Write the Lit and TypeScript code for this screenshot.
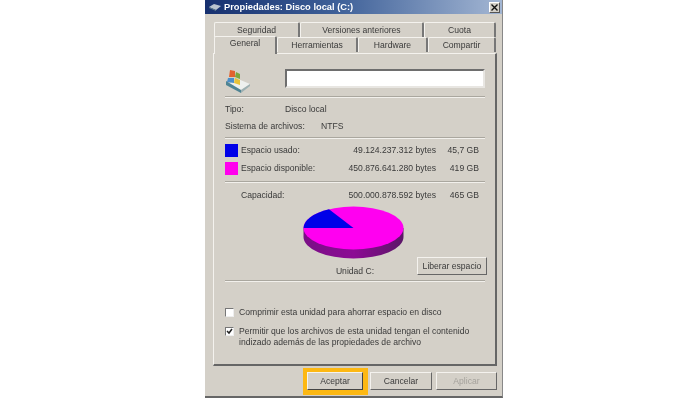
import { LitElement, html, css } from "lit";
import { customElement } from "lit/decorators.js";

@customElement("app-root")
export class AppRoot extends LitElement {
  static styles = css`
    :host { display: block; width: 700px; height: 400px; background: #fff; overflow: hidden;
      font-family: "Liberation Sans", Arial, sans-serif; font-size: 8.6px; color: #3a3a3a; }
    .page { padding-left: 205px; }
    .win { width: 298px; height: 398px; box-sizing: border-box; background: #d4d0c8; filter: blur(0.6px);
      border-right: 1px solid #888; border-bottom: 2px solid #666; display: flex; flex-direction: column; }
    .title { height: 14px; flex: none; background: linear-gradient(90deg, #16306f, #3f6199 45%, #a3b6d3 100%);
      display: flex; align-items: center; color: #fff; font-weight: bold; font-size: 9.3px; padding: 0 2px 0 4px; gap: 3px; }
    .title span { flex: 1; }
    .close { width: 11px; height: 11px; box-sizing: border-box; background: #d4d0c8; color: #111; display: flex; align-items: center;
      justify-content: center; border: 1px solid; border-color: #fff #555 #555 #fff; }
    .tabs { margin: 8px 6px 0 9px; height: 30px; flex: none; display: flex; flex-direction: column; }
    .row { display: flex; height: 15px; }
    .tab { box-sizing: border-box; text-align: center; border-top: 1px solid #f4f2ee; border-left: 1px solid #f4f2ee;
      border-right: 2px solid #777; line-height: 14px; border-radius: 2px 2px 0 0; }
    .row.a .tab { height: 15px; }
    .row.b { margin-bottom: -1px; }
    .tab.sel { background: #d4d0c8; height: 18px; position: relative; z-index: 1; margin-top: -1px; line-height: 13px; }
    .panel { margin: 1px 5px 0 8px; height: 313px; flex: none; box-sizing: border-box; border-top: 1px solid #f4f2ee; border-left: 1px solid #f4f2ee;
      border-right: 2px solid #666; border-bottom: 2px solid #666; padding: 15px 10px 0 11px; display: flex; flex-direction: column; }
    .head { display: flex; height: 27px; align-items: flex-start; gap: 35px; }
    .head svg { flex: none; }
    .input { width: 200px; height: 19px; flex: none; box-sizing: border-box; background: #fff; border: 2px solid; border-color: #6e6e6e #e8e6e2 #e8e6e2 #6e6e6e; }
    .sep { height: 1px; background: #aaa79f; border-bottom: 1px solid #f2f0ec; flex: none; }
    .sep.s2 { margin-top: 5px; }
    .sep.s3 { margin-top: 4px; }
    .info { display: grid; grid-template-columns: 60px 1fr; line-height: 12px; }
    .info.t1 { margin-top: 5px; }
    .info.t2 { margin-top: 5px; grid-template-columns: 96px 1fr; }
    .stats { display: grid; grid-template-columns: 12px 1fr auto 39px; column-gap: 4px; align-items: center; margin-top: 2px; padding-right: 6px; }
    .stats .sw { width: 13px; height: 13px; }
    .stats div { line-height: 18px; }
    .used { background: #0000e8; }
    .free-c { background: #ff00ee; }
    .r { text-align: right; }
    .cap { display: grid; grid-template-columns: 12px 1fr auto 39px; column-gap: 4px; margin-top: 6px; line-height: 12px; padding-right: 6px; }
    .pie { align-self: flex-start; margin: 5px 0 0 78px; display: block; }
    .under { display: flex; height: 22px; margin-top: -1px; align-items: flex-end; justify-content: space-between; }
    .under .lab { width: 192px; text-align: center; line-height: 14px; padding: 0 0 2px 68px; box-sizing: border-box; }
    .btn { box-sizing: border-box; background: #d4d0c8; border: 1px solid; border-color: #f4f2ee #666 #666 #f4f2ee; text-align: center; line-height: 16px; }
    .free { width: 70px; height: 18px; margin: 0 -2px 5px 0; }
    .checks { display: flex; flex-direction: column; margin-top: 25px; gap: 8px; }
    .chk { display: flex; gap: 5px; line-height: 11px; }
    .box { width: 9px; height: 9px; flex: none; box-sizing: border-box; background: #fff; border: 1px solid; border-color: #777 #eee #eee #777; margin-top: 1px; }
    .box svg { display: block; }
    .foot { display: flex; margin: 2px 5px 0 0; justify-content: flex-end; gap: 4px; align-items: flex-start; }
    .foot .btn { height: 18px; }
    .ok-wrap { padding: 4px 5px 5px 4px; margin-right: -2px; background: #fdb813; }
    .foot .ok { width: 56px; height: 18px; background: #d4d0c8; border-color: #f4f2ee #444 #444 #f4f2ee; }
    .cancel { width: 62px; margin-top: 4px; }
    .apply { width: 61px; margin-top: 4px; color: #a5a29c; }
    .w86 { width: 86px; } .w124 { width: 124px; } .w72 { width: 72px; }
    .w63 { width: 63px; } .w81 { width: 81px; } .w70 { width: 70px; } .w68 { width: 68px; }
  `;

  render() {
    return html`<div class="page"><div class="win">
      <div class="title">
        <svg width="12" height="10" viewBox="0 0 12 10"><path d="M0 5l5-3 7 2-5 4z" fill="#b9c4cf"/><path d="M0 5l7 3v1L0 6z" fill="#5f7f8f"/></svg>
        <span>Propiedades: Disco local (C:)</span>
        <div class="close"><svg width="7" height="7" viewBox="0 0 7 7"><path d="M0.5 0.5l6 6M6.5 0.5l-6 6" stroke="#111" stroke-width="1.4"/></svg></div>
      </div>
      <div class="tabs">
        <div class="row a">
          <div class="tab w86">Seguridad</div>
          <div class="tab w124">Versiones anteriores</div>
          <div class="tab w72">Cuota</div>
        </div>
        <div class="row b">
          <div class="tab sel w63">General</div>
          <div class="tab w81">Herramientas</div>
          <div class="tab w70">Hardware</div>
          <div class="tab w68">Compartir</div>
        </div>
      </div>
      <div class="panel">
        <div class="head">
          <svg width="25" height="24" viewBox="0 0 25 24">
            <path d="M3 15l10-5 12 5-9 6z" fill="#eef0ee"/>
            <path d="M1 12l15 9v3L1 16z" fill="#4f8494"/>
            <path d="M16 21l9-6v2l-9 7z" fill="#9db0b2"/>
            <path d="M5 1l5 1v6H4z" fill="#e2622e"/><path d="M11 3l4 2v5l-5-2z" fill="#7ca63c"/>
            <path d="M3 9l6 0v5l-7-1z" fill="#4d8fc9"/><path d="M10 9l5 2v5l-6-2z" fill="#e8c33a"/>
          </svg>
          <div class="input"></div>
        </div>
        <div class="sep"></div>
        <div class="info t1"><div>Tipo:</div><div>Disco local</div></div>
        <div class="info t2"><div>Sistema de archivos:</div><div>NTFS</div></div>
        <div class="sep s2"></div>
        <div class="stats">
          <div class="sw used"></div><div>Espacio usado:</div><div class="r">49.124.237.312 bytes</div><div class="r">45,7 GB</div>
          <div class="sw free-c"></div><div>Espacio disponible:</div><div class="r">450.876.641.280 bytes</div><div class="r">419 GB</div>
        </div>
        <div class="sep s3"></div>
        <div class="cap"><div></div><div>Capacidad:</div><div class="r">500.000.878.592 bytes</div><div class="r">465 GB</div></div>
        <svg class="pie" width="102" height="53" viewBox="0 0 102 53">
          <defs><linearGradient id="side" x1="0" x2="1" y1="0" y2="0"><stop offset="0" stop-color="#7a0f86"/><stop offset="0.5" stop-color="#8c0a94"/><stop offset="1" stop-color="#5c1668"/></linearGradient></defs>
          <path d="M0.500 22v9a50 21.500 0 0 0 100 0v-9z" fill="url(#side)"/>
          <ellipse cx="50.500" cy="22" rx="50" ry="21.500" fill="#ff00f0"/>
          <path d="M50.500 22H0.500A50 21.500 0 0 1 26 3.300z" fill="#0000e8"/>
        </svg>
        <div class="under">
          <div class="lab">Unidad C:</div>
          <div class="btn free">Liberar espacio</div>
        </div>
        <div class="sep"></div>
        <div class="checks">
          <div class="chk"><div class="box"></div><div>Comprimir esta unidad para ahorrar espacio en disco</div></div>
          <div class="chk"><div class="box"><svg width="7" height="7" viewBox="0 0 7 7"><path d="M1 3l2 2 3-4" fill="none" stroke="#222" stroke-width="1.5"/></svg></div><div>Permitir que los archivos de esta unidad tengan el contenido<br>indizado además de las propiedades de archivo</div></div>
        </div>
      </div>
      <div class="foot">
        <div class="ok-wrap"><div class="btn ok">Aceptar</div></div>
        <div class="btn cancel">Cancelar</div>
        <div class="btn apply">Aplicar</div>
      </div>
    </div></div>`;
  }
}
